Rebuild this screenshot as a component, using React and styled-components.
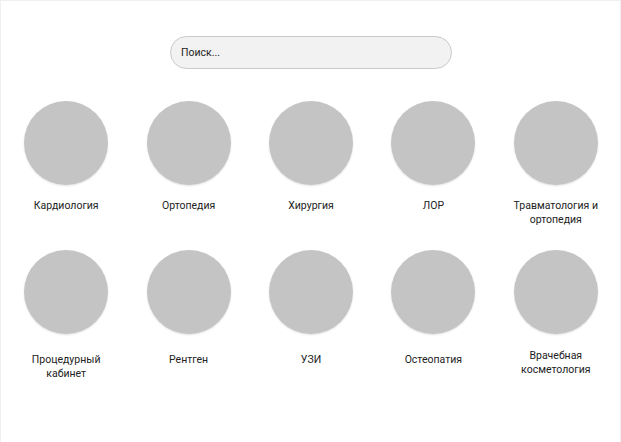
import React from "react";
import styled, { createGlobalStyle } from "styled-components";

const Global = createGlobalStyle`
  html, body { margin: 0; padding: 0; background: #ffffff; }
  * { box-sizing: border-box; }
`;

const Page = styled.div`
  width: 621px;
  height: 442px;
  border: 1px solid #f0f0f0;
  border-bottom: none;
  padding: 35px 3px 0 4px;
  font-family: Roboto, "Noto Sans", Arial, sans-serif;
  color: #1e1e1e;
  display: flex;
  flex-direction: column;
  align-items: center;
`;

const SearchWrap = styled.div`
  width: 100%;
  display: flex;
  justify-content: center;
`;

const Search = styled.input`
  width: 282px;
  height: 33px;
  border: 1px solid #c9c9c9;
  border-radius: 17px;
  background: #f2f2f2;
  padding: 0 12px 1px 10px;
  font-family: Roboto, "Noto Sans", Arial, sans-serif;
  font-size: 10.5px;
  color: #1e1e1e;
  outline: none;
  &::placeholder { color: #1e1e1e; opacity: 1; }
`;

const Grid = styled.div`
  width: 100%;
  margin-top: 32px;
  display: flex;
  flex-direction: column;
`;

const Row = styled.div`
  display: grid;
  grid-template-columns: repeat(5, 1fr);
  height: ${(p) => p.$height}px;
`;

const Cell = styled.div`
  display: flex;
  flex-direction: column;
  align-items: center;
`;

const Circle = styled.div`
  width: 84px;
  height: 84px;
  border-radius: 50%;
  background: #c4c4c4;
  box-shadow: 0 1px 2px rgba(0, 0, 0, 0.12);
`;

const Label = styled.div`
  margin-top: ${(p) => p.$gap}px;
  font-size: 10.5px;
  line-height: 13.5px;
  text-align: center;
  color: #222222;
  max-width: 110px;
`;

const rows = [
  {
    height: 149,
    gap: 14,
    items: [
      { name: "Кардиология" },
      { name: "Ортопедия" },
      { name: "Хирургия" },
      { name: "ЛОР" },
      { name: "Травматология и ортопедия" },
    ],
  },
  {
    height: 140,
    gap: 19,
    items: [
      { name: "Процедурный кабинет" },
      { name: "Рентген" },
      { name: "УЗИ" },
      { name: "Остеопатия" },
      { name: "Врачебная косметология", lift: 4 },
    ],
  },
];

export default function App() {
  return (
    <>
      <Global />
      <Page>
        <SearchWrap>
          <Search placeholder="Поиск..." />
        </SearchWrap>
        <Grid>
          {rows.map((row, i) => (
            <Row key={i} $height={row.height}>
              {row.items.map((it) => (
                <Cell key={it.name}>
                  <Circle />
                  <Label $gap={row.gap - (it.lift || 0)}>{it.name}</Label>
                </Cell>
              ))}
            </Row>
          ))}
        </Grid>
      </Page>
    </>
  );
}
